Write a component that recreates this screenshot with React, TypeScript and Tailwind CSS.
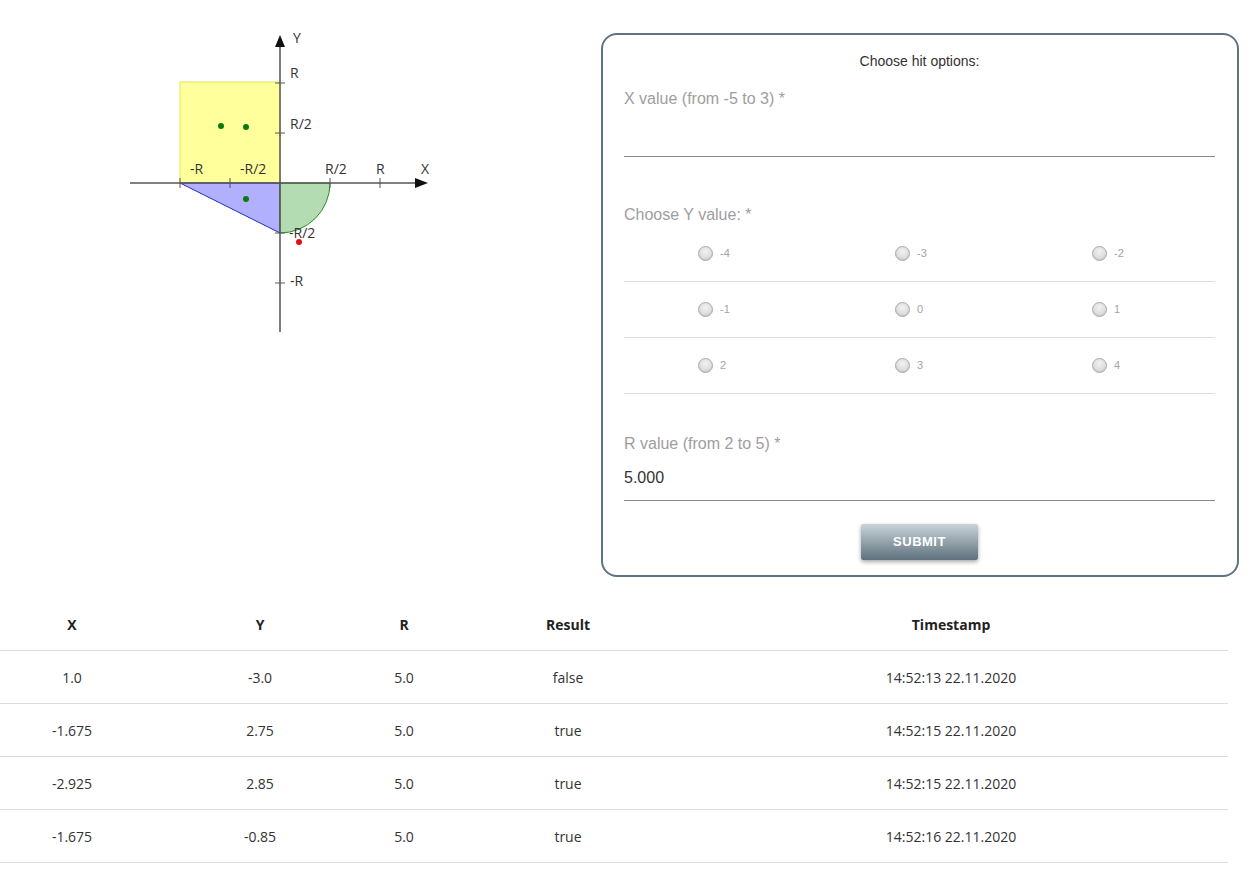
import React from "react";

const yValues = [
  ["-4", "-3", "-2"],
  ["-1", "0", "1"],
  ["2", "3", "4"],
];

const rows = [
  { x: "1.0", y: "-3.0", r: "5.0", result: "false", time: "14:52:13 22.11.2020" },
  { x: "-1.675", y: "2.75", r: "5.0", result: "true", time: "14:52:15 22.11.2020" },
  { x: "-2.925", y: "2.85", r: "5.0", result: "true", time: "14:52:15 22.11.2020" },
  { x: "-1.675", y: "-0.85", r: "5.0", result: "true", time: "14:52:16 22.11.2020" },
];

const points = [
  { cx: 91, cy: 93, hit: true },
  { cx: 116, cy: 94, hit: true },
  { cx: 116, cy: 166, hit: true },
  { cx: 169, cy: 209, hit: false },
];

function Graph() {
  const label = { fontFamily: "'Open Sans', 'Noto Sans', sans-serif", fontSize: 14, fill: "#333" };
  return (
    <svg width="300" height="310" viewBox="0 -10 300 310" className="block">
      {/* areas */}
      <rect x="50" y="49" width="100" height="101" fill="#ffff9c" stroke="#e6e65a" strokeWidth="1" />
      <polygon points="50,150 150,150 150,200" fill="#b0b0ff" stroke="#2b2bb8" strokeWidth="1" />
      <path d="M150,150 L200,150 A50,50 0 0 1 150,200 Z" fill="#b3dcb3" stroke="#2e8b2e" strokeWidth="1" />

      {/* axes */}
      <line x1="0" y1="150" x2="288" y2="150" stroke="#555" strokeWidth="1.5" />
      <polygon points="285,145 298,150 285,155" fill="#111" />
      <line x1="150" y1="299" x2="150" y2="12" stroke="#555" strokeWidth="1.5" />
      <polygon points="145,14 150,2 155,14" fill="#111" />

      {/* ticks */}
      {[50, 100, 200, 250].map((x) => (
        <line key={x} x1={x} y1="145" x2={x} y2="155" stroke="#555" strokeWidth="1" />
      ))}
      {[50, 100, 200, 250].map((y) => (
        <line key={y} x1="145" y1={y} x2="155" y2={y} stroke="#555" strokeWidth="1" />
      ))}

      {/* labels */}
      <text x="163" y="10" style={label}>Y</text>
      <text x="160" y="45" style={label}>R</text>
      <text x="160" y="96" style={label}>R/2</text>
      <text x="159" y="205" style={label}>-R/2</text>
      <text x="160" y="253" style={label}>-R</text>
      <text x="60" y="141" style={label}>-R</text>
      <text x="110" y="141" style={label}>-R/2</text>
      <text x="195" y="141" style={label}>R/2</text>
      <text x="246" y="141" style={label}>R</text>
      <text x="291" y="141" style={label}>X</text>

      {/* hits */}
      {points.map((p, i) => (
        <circle key={i} cx={p.cx} cy={p.cy} r="3" fill={p.hit ? "#0a7a0a" : "#e01010"} />
      ))}
    </svg>
  );
}

function Radio({ value }: { value: string }) {
  return (
    <label className="flex items-center gap-[7px]">
      <span className="h-[15px] w-[15px] rounded-full border border-[#a9a9a9] bg-[radial-gradient(circle_at_50%_35%,#f2f2f2,#cfcfcf)] shadow-[inset_0_-1px_1px_rgba(0,0,0,0.08)]" />
      <span className="w-[27px] text-[11px] text-[#a3a3a3]">{value}</span>
    </label>
  );
}

function HitForm() {
  return (
    <div className="h-[544px] w-[638px] rounded-[16px] border-2 border-[#61747f] pt-[16px] pb-[14px] pl-[21px] pr-[22px] font-['Liberation_Sans',Arial,sans-serif]">
      <div className="text-center text-[14px] leading-[20px] text-[#333]">Choose hit options:</div>

      <div className="mt-[18px] text-[16px] leading-[20px] text-[#9e9e9e]">X value (from -5 to 3) *</div>
      <div className="h-[48px] border-b border-[#8a8a8a]" />

      <div className="mt-[48px] text-[16px] leading-[20px] text-[#9e9e9e]">Choose Y value: *</div>
      <div className="mt-px">
        {yValues.map((row, i) => (
          <div key={i} className="grid h-[56px] grid-cols-3 items-center border-b border-[#dcdcdc]">
            {row.map((v) => (
              <div key={v} className="flex justify-center">
                <Radio value={v} />
              </div>
            ))}
          </div>
        ))}
      </div>

      <div className="mt-[40px] text-[16px] leading-[20px] text-[#9e9e9e]">R value (from 2 to 5) *</div>
      <div className="h-[47px] border-b border-[#8a8a8a] pt-[14px] text-[16px] leading-[20px] text-[#333]">5.000</div>

      <div className="mt-[23px] flex justify-center">
        <button className="h-[36px] w-[117px] rounded-[2px] bg-[linear-gradient(#c9d3d9,#5e717c)] text-[13px] font-extrabold tracking-[0.5px] text-white shadow-[0_2px_4px_rgba(0,0,0,0.35)] font-['Liberation_Sans',Arial,sans-serif]">
          SUBMIT
        </button>
      </div>
    </div>
  );
}

function ResultsTable() {
  const cols = "grid grid-cols-[144px_232px_56px_272px_494px] items-center text-center";
  return (
    <div className="w-[1228px] font-['Open_Sans','Noto_Sans',sans-serif] text-[14px]">
      <div className={`${cols} h-[52px] border-b border-[#dcdcdc] font-bold text-[#222]`}>
        <div>X</div>
        <div>Y</div>
        <div>R</div>
        <div>Result</div>
        <div>Timestamp</div>
      </div>
      {rows.map((r, i) => (
        <div key={i} className={`${cols} h-[53px] border-b border-[#dcdcdc] text-[#333]`}>
          <div>{r.x}</div>
          <div>{r.y}</div>
          <div>{r.r}</div>
          <div>{r.result}</div>
          <div>{r.time}</div>
        </div>
      ))}
    </div>
  );
}

export default function App() {
  return (
    <div className="min-h-[876px] w-[1260px] bg-white">
      <div className="flex pt-[33px]">
        <div className="-mt-[10px] w-[601px] pl-[130px]">
          <Graph />
        </div>
        <HitForm />
      </div>
      <div className="mt-[22px]">
        <ResultsTable />
      </div>
    </div>
  );
}
